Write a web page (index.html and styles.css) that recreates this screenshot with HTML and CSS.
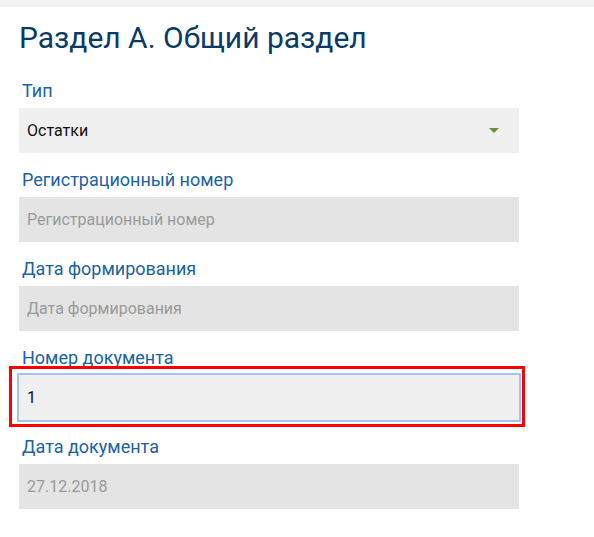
FILE: index.html
```html
<!DOCTYPE html>
<html lang="ru">
<head>
    <meta charset="UTF-8">
    <meta name="viewport" content="width=device-width, initial-scale=1.0">
    <title>Раздел А</title>
    <link rel="stylesheet" href="styles.css">
</head>
<body>
    <div class="topbar"></div>

    <div class="section">
        <h1 class="section-title">Раздел А. Общий раздел</h1>

        <div class="field">
            <label class="field-label">Тип</label>
            <div class="select-box">
                <span>Остатки</span>
                <span class="select-arrow"></span>
            </div>
        </div>

        <div class="field">
            <label class="field-label">Регистрационный номер</label>
            <input class="field-input" type="text" placeholder="Регистрационный номер" disabled>
        </div>

        <div class="field">
            <label class="field-label">Дата формирования</label>
            <input class="field-input" type="text" placeholder="Дата формирования" disabled>
        </div>

        <div class="field">
            <label class="field-label">Номер документа</label>
            <div class="highlight">
                <input class="field-input focused" type="text" value="1">
            </div>
        </div>

        <div class="field">
            <label class="field-label">Дата документа</label>
            <input class="field-input" type="text" value="27.12.2018" disabled>
        </div>
    </div>
</body>
</html>
```

FILE: styles.css
```css
* {font-family: Roboto, 'Noto Sans', sans-serif;}
body {
    margin: 0;
    background: #fff;
}

.topbar {
    height: 7px;
    background-color: #f2f2f2;
}

.section {
    padding: 0 19px;
}

.section-title {
    margin: 13px 0 24px;
    font-size: 30px;
    font-weight: 400;
    line-height: 36px;
    color: #0b3a67;
}

.field {
    width: 500px;
    margin-top: 16px;
}

.field-label {
    display: block;
    padding-left: 3px;
    margin-bottom: 6px;
    font-size: 18px;
    line-height: 22px;
    color: #1a62a8;
}

.select-box,
.field-input {
    display: flex;
    align-items: center;
    box-sizing: border-box;
    width: 500px;
    height: 45px;
    padding: 0 8px;
    border: none;
    font-size: 16px;
    color: #111;
    background-color: #f0f0f0;
}

.select-box {
    justify-content: space-between;
}

.select-arrow {
    width: 0;
    height: 0;
    margin-right: 12px;
    border-left: 5px solid transparent;
    border-right: 5px solid transparent;
    border-top: 5px solid #6b8f3c;
}

.field-input:disabled {
    background-color: #e4e4e4;
    color: #999;
}

.field-input::placeholder {
    color: #9a9a9a;
    opacity: 1;
}

.highlight {
    position: relative;
}

.highlight::after {
    content: '';
    position: absolute;
    left: -10px;
    top: -9px;
    right: -6px;
    bottom: -7px;
    border: 3px solid #ff0000;
    pointer-events: none;
}

.field-input.focused {
    outline: none;
    box-shadow: 0 0 0 2px #a3c4f0;
}
```
